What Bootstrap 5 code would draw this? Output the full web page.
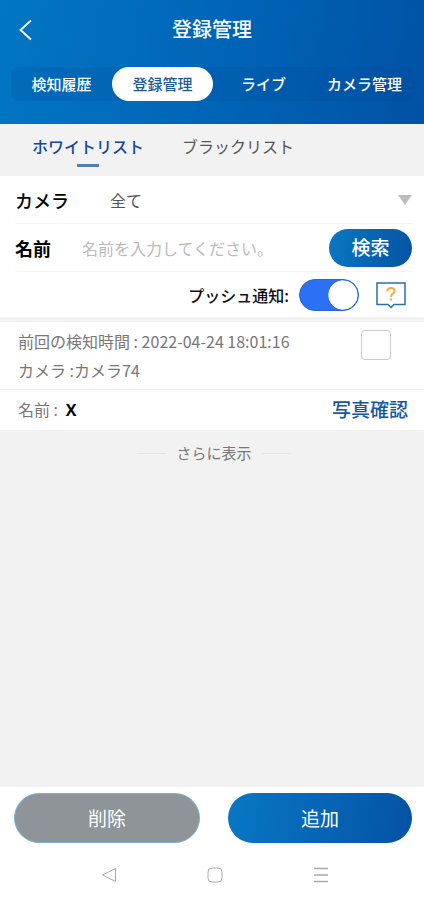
<!DOCTYPE html>
<html lang="ja">
<head>
<meta charset="utf-8">
<meta name="viewport" content="width=device-width, initial-scale=1">
<title>登録管理</title>
<link href="https://cdn.jsdelivr.net/npm/bootstrap@5.3.0/dist/css/bootstrap.min.css" rel="stylesheet">
<style>
  body { font-family: "Noto Sans CJK JP", sans-serif; font-size: 16px; line-height: 24px; background: #f2f2f2; color: #111; }
  a { text-decoration: none; }
  .app-header { background: linear-gradient(100deg, #0276c2 0%, #0067b9 45%, #0052a6 100%); height: 124px; }
  .title-bar { height: 67px; padding: 0 16px; }
  .title-bar h1 { font-size: 20px; line-height: 28px; font-weight: 500; padding-bottom: 10px; }
  .side-slot { width: 20px; }
  .main-tabs { margin: 0 9px 0 11px; border-radius: 8px; background: rgba(0, 70, 150, .18); }
  .main-tabs .nav-link { color: #fff; font-size: 15px; line-height: 34px; font-weight: 500; padding: 0; border-radius: 17px; white-space: nowrap; }
  .main-tabs .nav-link.active { background: #fff; color: #1a5c96; }
  .list-tabs { height: 52px; padding: 10px 32px 0; gap: 38px; }
  .list-tabs a { color: #555; }
  .list-tabs a.active { color: #1149a0; font-weight: 500; }
  .list-tabs a.active::after { content: ""; display: block; width: 22px; height: 3px; margin: 6px auto 0; background: #4a7fb5; }
  .form-row { height: 48px; margin: 0 12px 0 15px; border-bottom: 1px solid #f4f4f4; }
  .form-row label { font-size: 18px; font-weight: 500; color: #000; }
  .form-row .camera-label { width: 95px; }
  .form-row .name-label { width: 67px; font-weight: 700; }
  .plain-field { border: 0; background: transparent; padding: 0; outline: 0; min-width: 0; color: #555; appearance: none; height: 32px; }
  .plain-field::placeholder { color: #bbb; opacity: 1; }
  .search-btn { width: 83px; height: 38px; border-radius: 19px; padding: 0; border: 0; color: #fff; font-size: 19px; font-weight: 500; background: linear-gradient(100deg, #0a78c2, #0553a4); }
  .push-row { height: 45px; padding: 0 17px 0 0; border-bottom: 0; }
  .push-label { color: #111; font-weight: 500; }
  .form-switch .form-check-input.push-switch { width: 60px; height: 32px; margin: 0 0 0 10px; border: 1px solid #2467d8; box-shadow: none; background-color: #2c70f6; background-size: 30px; background-image: radial-gradient(circle closest-side, #fff 95%, transparent); background-repeat: no-repeat; background-position: right center; }
  .form-switch .form-check-input.push-switch:not(:checked) { background-color: #bbb; border-color: #bbb; background-position: left center; }
  .record { color: #777; margin-top: 5px; }
  .record-info { height: 68px; padding: 5px 33px 0 18px; border-bottom: 1px solid #f0f0f0; }
  .record-info p { line-height: 29px; }
  .pick-box { width: 30px; height: 30px; margin: 3px 0 0; border: 1px solid #ccc; border-radius: 4px; }
  .record-name { height: 40px; padding: 0 16px 2px 18px; }
  .name-value { font-family: "Open Sans", sans-serif; color: #000; }
  .photo-link { color: #1458a0; font-size: 19px; font-weight: 500; }
  .more-row { gap: 10px; margin: 12px 0 0 4px; }
  .more-row button { color: #777; font-size: 15px; }
  .rule-line { width: 29px; height: 1px; background: #e4e4e4; }
  .actions { gap: 28px; padding: 6px 12px 0 14px; }
  .action-btn { height: 50px; border-radius: 25px; padding: 0; color: #fff; font-size: 19px; line-height: 28px; }
  .delete-btn, .delete-btn:hover { background: #8e9497; border: 1px solid #77b3dc; color: #fff; }
  .add-btn, .add-btn:hover { background: linear-gradient(100deg, #0878c4 0%, #0552a5 100%); border: 0; color: #fff; }
  .system-nav { height: 57px; padding: 6px 50px 0 56px; }
</style>
<script src="https://cdn.jsdelivr.net/npm/bootstrap@5.3.0/dist/js/bootstrap.bundle.min.js"></script>
</head>
<body class="d-flex flex-column min-vh-100">
<header class="app-header flex-shrink-0">
  <div class="title-bar d-flex align-items-center">
    <a href="#" class="side-slot d-flex pb-2" aria-label="戻る"><svg width="20" height="22" viewBox="0 0 20 22" fill="none" stroke="#fff" stroke-width="1.800"><path d="M15 1.500 4.500 11 15 20.500"/></svg></a>
    <h1 class="flex-grow-1 text-center text-white m-0">登録管理</h1>
    <span class="side-slot"></span>
  </div>
  <nav class="main-tabs nav nav-fill">
    <a class="nav-link col-3" href="#">検知履歴</a>
    <a class="nav-link col-3 active" href="#" aria-current="page">登録管理</a>
    <a class="nav-link col-3" href="#">ライブ</a>
    <a class="nav-link col-3" href="#">カメラ管理</a>
  </nav>
</header>
<main class="flex-grow-1">
  <nav class="list-tabs d-flex">
    <a href="#" class="active" aria-current="page">ホワイトリスト</a>
    <a href="#">ブラックリスト</a>
  </nav>
  <form class="bg-white">
    <div class="form-row d-flex align-items-center">
      <label class="camera-label" for="camera">カメラ</label>
      <select class="plain-field flex-grow-1" id="camera"><option>全て</option></select>
      <svg width="14" height="10" viewBox="0 0 14 10"><path d="M0 0h14L7 10z" fill="#bdbdbd"/></svg>
    </div>
    <div class="form-row d-flex align-items-center">
      <label class="name-label" for="person">名前</label>
      <input class="plain-field flex-grow-1" id="person" type="text" placeholder="名前を入力してください。">
      <button class="btn search-btn" type="button">検索</button>
    </div>
    <div class="push-row d-flex align-items-center justify-content-end">
      <label class="push-label" for="push">プッシュ通知:</label>
      <div class="form-switch d-flex p-0"><input class="form-check-input push-switch" id="push" type="checkbox" role="switch" checked></div>
      <button class="btn p-0 border-0 d-flex ms-3" type="button" aria-label="ヘルプ"><svg width="32" height="28" viewBox="0 0 32 28" fill="none"><path d="M2 2H30V23.500H19L16 26.500 13 23.500H2Z" stroke="#2d6fa8" stroke-width="1.500"/><path d="M12.500 10.500V9.500Q13 7 16 7 19.500 7 19.500 10 19.500 11.500 17.800 12.600 16 13.800 16 16" stroke="#ecae42" stroke-width="2"/><path d="M15 17.500h2v2h-2z" fill="#ecae42"/></svg></button>
    </div>
  </form>
  <section class="record bg-white">
    <div class="record-info d-flex justify-content-between">
      <div><p class="m-0">前回の検知時間 : 2022-04-24 18:01:16</p><p class="m-0">カメラ :カメラ74</p></div>
      <input class="form-check-input pick-box" type="checkbox" aria-label="選択">
    </div>
    <div class="record-name d-flex align-items-center justify-content-between">
      <span>名前 : <strong class="name-value ms-1">X</strong></span>
      <a class="photo-link" href="#">写真確認</a>
    </div>
  </section>
  <div class="more-row d-flex align-items-center justify-content-center">
    <span class="rule-line"></span><button class="btn p-0 border-0" type="button">さらに表示</button><span class="rule-line"></span>
  </div>
</main>
<footer class="bg-white">
  <div class="actions d-flex">
    <button class="btn action-btn delete-btn flex-fill" type="button">削除</button>
    <button class="btn action-btn add-btn flex-fill" type="button">追加</button>
  </div>
  <nav class="system-nav d-flex align-items-center justify-content-around" aria-label="システム">
    <button class="btn p-0 border-0 d-flex" type="button" aria-label="戻る"><svg width="16" height="16" viewBox="0 0 16 16" fill="none" stroke="#aaa" stroke-linejoin="round"><path d="M14.500 1.500v13L1.500 8z"/></svg></button>
    <button class="btn p-0 border-0 d-flex" type="button" aria-label="ホーム"><svg width="16" height="16" viewBox="0 0 16 16" fill="none" stroke="#aaa"><rect x="1" y="1" width="14" height="14" rx="4"/></svg></button>
    <button class="btn p-0 border-0 d-flex" type="button" aria-label="メニュー"><svg width="16" height="16" viewBox="0 0 16 16" fill="none" stroke="#aaa" stroke-width="1.500"><path d="M1 1.500h14M1 8h14M1 14.500h14"/></svg></button>
  </nav>
</footer>
</body>
</html>
